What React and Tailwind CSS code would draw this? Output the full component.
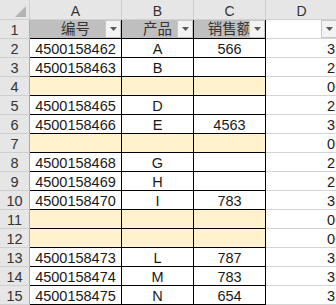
import React from "react";

const rows = [
  { n: 2, a: "4500158462", b: "A", c: "566", d: 3 },
  { n: 3, a: "4500158463", b: "B", c: "", d: 2 },
  { n: 4, fill: true, d: 0 },
  { n: 5, a: "4500158465", b: "D", c: "", d: 2 },
  { n: 6, a: "4500158466", b: "E", c: "4563", d: 3 },
  { n: 7, fill: true, d: 0 },
  { n: 8, a: "4500158468", b: "G", c: "", d: 2 },
  { n: 9, a: "4500158469", b: "H", c: "", d: 2 },
  { n: 10, a: "4500158470", b: "I", c: "783", d: 3 },
  { n: 11, fill: true, d: 0 },
  { n: 12, fill: true, d: 0 },
  { n: 13, a: "4500158473", b: "L", c: "787", d: 3 },
  { n: 14, a: "4500158474", b: "M", c: "783", d: 3 },
  { n: 15, a: "4500158475", b: "N", c: "654", d: 3 },
];

function FilterButton() {
  return (
    <span className="absolute right-0 top-0 w-[16px] h-[18px] box-border bg-[#f3f3f3] border border-[#c8c8c8] flex items-center justify-center">
      <svg width="7" height="4" viewBox="0 0 7 4">
        <path d="M0 0h7L3.5 4z" fill="#5a5a5a" />
      </svg>
    </span>
  );
}

function ColHead({ label }) {
  return (
    <div className="h-[20px] box-border bg-[#e6e6e6] border-r border-b border-[#cfcfcf] text-center text-[14px] leading-[16px] pt-[3px] text-[#333]">
      {label}
    </div>
  );
}

function RowHead({ n }) {
  return (
    <div className="h-[19px] box-border bg-[#e6e6e6] border-r border-r-[#ababab] border-b border-b-[#cfcfcf] text-center text-[14.5px] leading-[15px] pt-[3px] text-[#333]">
      {n}
    </div>
  );
}

function Cell({ children, fill }) {
  return (
    <div
      className={`h-[19px] box-border border-r border-b border-black text-center text-[14.5px] leading-[15px] pt-[3px] text-[#1a1a1a] whitespace-nowrap overflow-hidden ${
        fill ? "bg-[#fff2cc]" : "bg-white"
      }`}
    >
      {children}
    </div>
  );
}

function DCell({ children }) {
  return (
    <div className="h-[19px] box-border border-r border-b border-[#d4d4d4] bg-white text-right pr-[2px] text-[14.5px] leading-[15px] pt-[3px] text-[#1a1a1a]">
      {children}
    </div>
  );
}

function HeadCell({ label }) {
  return (
    <div className="relative h-[19px] box-border bg-[#bfbfbf] border-r border-b border-black text-center text-[14.5px] leading-[15px] pt-[2px] text-[#333] whitespace-nowrap overflow-hidden">
      {label}
      <FilterButton />
    </div>
  );
}

export default function App() {
  return (
    <div className="w-[336px] h-[305px] overflow-hidden bg-white font-['Liberation_Sans','Noto_Sans_CJK_SC',sans-serif]">
      <div className="grid grid-cols-[30px_92px_72px_72px_72px] w-[338px]">
        <div className="h-[20px] box-border bg-[#e6e6e6] border-r border-b border-[#cfcfcf] flex justify-end items-end pr-[3px] pb-[2px]">
          <svg width="11" height="11" viewBox="0 0 11 11">
            <path d="M11 0V11H0z" fill="#b4b4b4" />
          </svg>
        </div>
        <ColHead label="A" />
        <ColHead label="B" />
        <ColHead label="C" />
        <ColHead label="D" />

        <RowHead n={1} />
        <HeadCell label="编号" />
        <HeadCell label="产品" />
        <HeadCell label="销售额" />
        <div className="relative h-[19px] box-border border-r border-b border-[#d4d4d4] bg-white">
          <FilterButton />
        </div>

        {rows.map((r) => (
          <React.Fragment key={r.n}>
            <RowHead n={r.n} />
            <Cell fill={r.fill}>{r.a}</Cell>
            <Cell fill={r.fill}>{r.b}</Cell>
            <Cell fill={r.fill}>{r.c}</Cell>
            <DCell>{r.d}</DCell>
          </React.Fragment>
        ))}
      </div>
    </div>
  );
}
